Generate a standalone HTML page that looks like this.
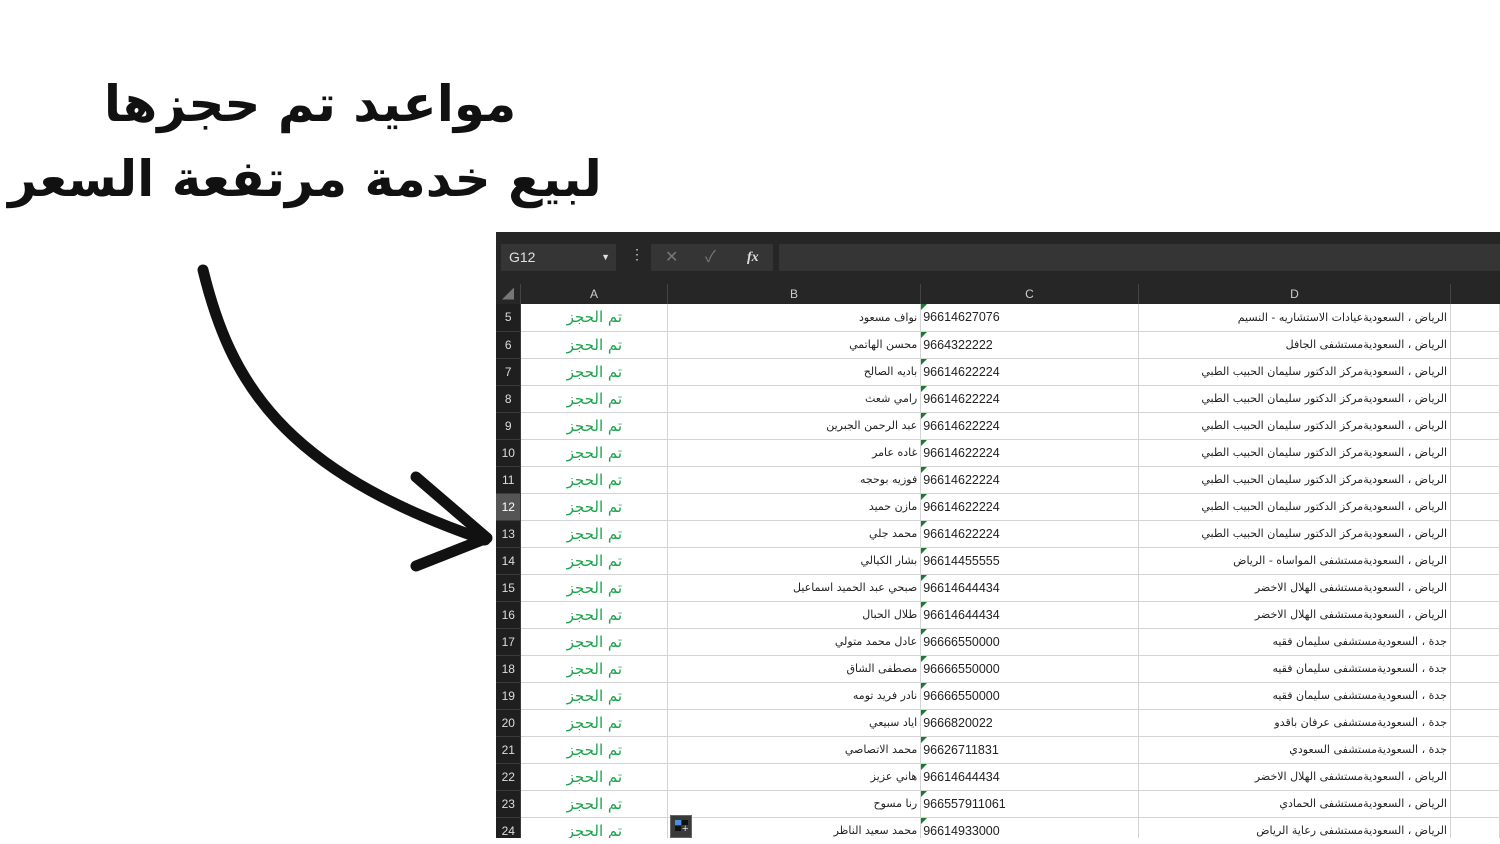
<!DOCTYPE html>
<html><head><meta charset="utf-8"><style>
*{margin:0;padding:0;box-sizing:border-box}
body{width:1500px;height:844px;background:#fff;position:relative;overflow:hidden;font-family:"Liberation Sans","Noto Sans CJK SC",sans-serif}
.title{position:absolute;left:0;width:620px;text-align:center;font-family:"DejaVu Sans","Noto Sans CJK SC",sans-serif;font-weight:bold;font-size:50px;color:#111;direction:rtl}
.sheet{position:absolute;left:496px;top:232px;width:1004px;height:606px;background:#fff;overflow:hidden}
.bar{position:absolute;left:0;top:0;width:1004px;height:52px;background:#262626}
.nb{position:absolute;left:5px;top:12px;width:115px;height:27px;background:#353535;color:#e0e0e0;font-size:14px;line-height:27px;padding-left:8px}
.hdr{position:absolute;left:0;top:52px;width:1004px;height:20px;background:#262626;color:#ccc;font-size:12px}
.hdr div{position:absolute;top:0;height:20px;line-height:20px;text-align:center;border-right:1px solid #444}
table{position:absolute;left:0;top:72px;border-collapse:collapse;table-layout:fixed}
td{height:27px;border-bottom:1px solid #d4d4d4;border-right:1px solid #d4d4d4;font-size:12px;color:#222;white-space:nowrap;overflow:hidden;font-family:"DejaVu Sans","Noto Sans CJK SC",sans-serif;font-size:11px}
td.n{background:#1f1f1f;color:#ddd;text-align:center;border-color:#3a3a3a;font-family:"Liberation Sans",sans-serif;font-size:12px}
td.s{background:#555;color:#fff}
td.a{color:#1aa34a;text-align:center;font-size:15px;direction:rtl}
td.b{text-align:right;padding-right:3px;direction:rtl}
td.c{padding-left:2px;font-family:"Liberation Sans",sans-serif;font-size:12.5px;position:relative}
td.c:before{content:"";position:absolute;left:0;top:0;border-top:6px solid #1a7a30;border-right:6px solid transparent}
td.d{text-align:right;padding-right:3px;direction:rtl}
</style></head><body>
<div class="title" style="top:75px;left:0;width:620px">مواعيد تم حجزها</div>
<div class="title" style="top:150px;left:0;width:610px">لبيع خدمة مرتفعة السعر</div>
<svg style="position:absolute;left:0;top:0" width="600" height="600">
<path d="M203 270 C 230 380, 280 470, 485 540" fill="none" stroke="#111" stroke-width="11" stroke-linecap="round"/>
<path d="M416 477 L487 538 L416 566" fill="none" stroke="#111" stroke-width="11" stroke-linecap="round" stroke-linejoin="round"/>
</svg>
<div class="sheet">
<div class="bar">
<div class="nb">G12<span style="position:absolute;right:6px;top:0;font-size:9px">▼</span></div>
<div style="position:absolute;left:134px;top:14px;color:#ccc;font-size:14px">⋮</div>
<div style="position:absolute;left:155px;top:12px;width:122px;height:27px;background:#353535;color:#777;font-size:16px;line-height:27px"><span style="position:absolute;left:14px">✕</span><span style="position:absolute;left:54px">✓</span><span style="position:absolute;left:96px;color:#ddd;font-style:italic;font-family:'Liberation Serif',serif;font-weight:bold;font-size:14px">fx</span></div>
<div style="position:absolute;left:283px;top:12px;width:721px;height:27px;background:#353535"></div>
</div>
<div class="hdr">
<div style="left:0;width:25px;color:#777">◢</div>
<div style="left:25px;width:147px">A</div>
<div style="left:172px;width:253px">B</div>
<div style="left:425px;width:218px">C</div>
<div style="left:643px;width:312px">D</div>
</div>
<table>
<colgroup><col style="width:25px"><col style="width:147px"><col style="width:253px"><col style="width:218px"><col style="width:312px"><col style="width:49px"></colgroup>
<tr><td class="n">5</td><td class="a">تم الحجز</td><td class="b">نواف مسعود</td><td class="c">96614627076</td><td class="d">الرياض ، السعوديةعيادات الاستشاريه - النسيم</td><td></td></tr>
<tr><td class="n">6</td><td class="a">تم الحجز</td><td class="b">محسن الهاتمي</td><td class="c">9664322222</td><td class="d">الرياض ، السعوديةمستشفى الجافل</td><td></td></tr>
<tr><td class="n">7</td><td class="a">تم الحجز</td><td class="b">باديه الصالح</td><td class="c">96614622224</td><td class="d">الرياض ، السعوديةمركز الدكتور سليمان الحبيب الطبي</td><td></td></tr>
<tr><td class="n">8</td><td class="a">تم الحجز</td><td class="b">رامي شعث</td><td class="c">96614622224</td><td class="d">الرياض ، السعوديةمركز الدكتور سليمان الحبيب الطبي</td><td></td></tr>
<tr><td class="n">9</td><td class="a">تم الحجز</td><td class="b">عبد الرحمن الجبرين</td><td class="c">96614622224</td><td class="d">الرياض ، السعوديةمركز الدكتور سليمان الحبيب الطبي</td><td></td></tr>
<tr><td class="n">10</td><td class="a">تم الحجز</td><td class="b">غاده عامر</td><td class="c">96614622224</td><td class="d">الرياض ، السعوديةمركز الدكتور سليمان الحبيب الطبي</td><td></td></tr>
<tr><td class="n">11</td><td class="a">تم الحجز</td><td class="b">فوزيه بوحجه</td><td class="c">96614622224</td><td class="d">الرياض ، السعوديةمركز الدكتور سليمان الحبيب الطبي</td><td></td></tr>
<tr><td class="n s">12</td><td class="a">تم الحجز</td><td class="b">مازن حميد</td><td class="c">96614622224</td><td class="d">الرياض ، السعوديةمركز الدكتور سليمان الحبيب الطبي</td><td></td></tr>
<tr><td class="n">13</td><td class="a">تم الحجز</td><td class="b">محمد جلي</td><td class="c">96614622224</td><td class="d">الرياض ، السعوديةمركز الدكتور سليمان الحبيب الطبي</td><td></td></tr>
<tr><td class="n">14</td><td class="a">تم الحجز</td><td class="b">بشار الكيالي</td><td class="c">96614455555</td><td class="d">الرياض ، السعوديةمستشفى المواساه - الرياض</td><td></td></tr>
<tr><td class="n">15</td><td class="a">تم الحجز</td><td class="b">صبحي عبد الحميد اسماعيل</td><td class="c">96614644434</td><td class="d">الرياض ، السعوديةمستشفى الهلال الاخضر</td><td></td></tr>
<tr><td class="n">16</td><td class="a">تم الحجز</td><td class="b">طلال الحبال</td><td class="c">96614644434</td><td class="d">الرياض ، السعوديةمستشفى الهلال الاخضر</td><td></td></tr>
<tr><td class="n">17</td><td class="a">تم الحجز</td><td class="b">عادل محمد متولي</td><td class="c">96666550000</td><td class="d">جدة ، السعوديةمستشفى سليمان فقيه</td><td></td></tr>
<tr><td class="n">18</td><td class="a">تم الحجز</td><td class="b">مصطفى الشاق</td><td class="c">96666550000</td><td class="d">جدة ، السعوديةمستشفى سليمان فقيه</td><td></td></tr>
<tr><td class="n">19</td><td class="a">تم الحجز</td><td class="b">نادر فريد تومه</td><td class="c">96666550000</td><td class="d">جدة ، السعوديةمستشفى سليمان فقيه</td><td></td></tr>
<tr><td class="n">20</td><td class="a">تم الحجز</td><td class="b">اياد سبيعي</td><td class="c">9666820022</td><td class="d">جدة ، السعوديةمستشفى عرفان باقدو</td><td></td></tr>
<tr><td class="n">21</td><td class="a">تم الحجز</td><td class="b">محمد الاتصاصي</td><td class="c">96626711831</td><td class="d">جدة ، السعوديةمستشفى السعودي</td><td></td></tr>
<tr><td class="n">22</td><td class="a">تم الحجز</td><td class="b">هاني عزيز</td><td class="c">96614644434</td><td class="d">الرياض ، السعوديةمستشفى الهلال الاخضر</td><td></td></tr>
<tr><td class="n">23</td><td class="a">تم الحجز</td><td class="b">رنا مسوح</td><td class="c">966557911061</td><td class="d">الرياض ، السعوديةمستشفى الحمادي</td><td></td></tr>
<tr><td class="n">24</td><td class="a">تم الحجز</td><td class="b">محمد سعيد الناظر</td><td class="c">96614933000</td><td class="d">الرياض ، السعوديةمستشفى رعاية الرياض</td><td></td></tr>
</table>
<div style="position:absolute;left:174px;top:583px;width:22px;height:23px;background:#3a3a3a;border:1px solid #666"><div style="position:absolute;left:4px;top:4px;width:6px;height:5px;background:#4a8fe0"></div><div style="position:absolute;left:11px;top:4px;width:6px;height:5px;background:#111"></div><div style="position:absolute;left:4px;top:10px;width:6px;height:5px;background:#111"></div><span style="position:absolute;left:11px;top:7px;color:#ddd;font-size:11px">+</span></div>
</div>
</body></html>
